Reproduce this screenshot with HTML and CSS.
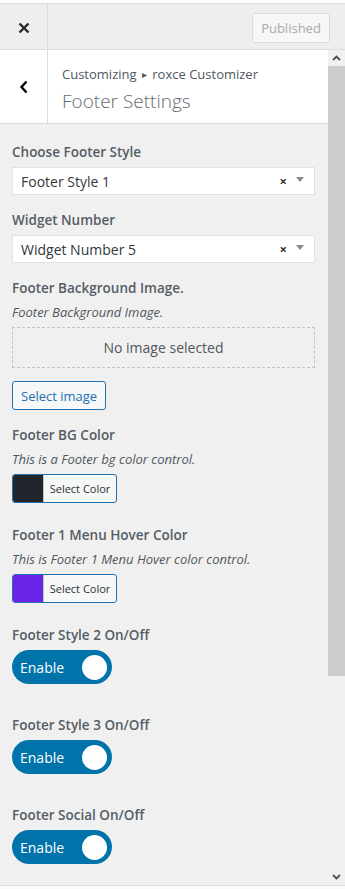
FILE: index.html
```html
<!DOCTYPE html>
<html>
	<head>
		<meta charset="utf-8">
		<title>Footer Settings</title>
		<link rel="stylesheet" href="styles.css">
	</head>
	<body>
		<div class="panel">
			<div class="header">
				<button class="close" type="button">
					<svg width="12" height="12" viewBox="0 0 12 12"><path d="M1.5 1.5l9 9M10.5 1.5l-9 9" stroke="#23282d" stroke-width="2.4" fill="none"/></svg>
				</button>
				<div class="actions">
					<span class="published">Published</span>
				</div>
			</div>

			<div class="scroll">
				<div class="scroll-inner">
					<div class="section-title">
						<button class="back" type="button">
							<svg width="10" height="14" viewBox="0 0 10 14"><path d="M7.5 1.5L2.5 7l5 5.5" stroke="#000" stroke-width="2.4" fill="none"/></svg>
						</button>
						<div class="section-meta">
							<span class="crumb">Customizing <span class="sep">&#9656;</span> roxce Customizer</span>
							<h3>Footer Settings</h3>
						</div>
					</div>

					<ul class="controls">
						<li class="ctl">
							<span class="ctl-title">Choose Footer Style</span>
							<div class="select">
								<span>Footer Style 1</span>
								<span class="clear">&times;</span>
								<span class="caret"></span>
							</div>
						</li>
						<li class="ctl">
							<span class="ctl-title">Widget Number</span>
							<div class="select">
								<span>Widget Number 5</span>
								<span class="clear">&times;</span>
								<span class="caret"></span>
							</div>
						</li>
						<li class="ctl">
							<span class="ctl-title">Footer Background Image.</span>
							<span class="ctl-desc">Footer Background Image.</span>
							<div class="placeholder">No image selected</div>
							<button class="btn" type="button">Select image</button>
						</li>
						<li class="ctl">
							<span class="ctl-title">Footer BG Color</span>
							<span class="ctl-desc">This is a Footer bg color control.</span>
							<button class="color-btn" type="button"><span class="swatch" style="background:#22252b"></span><span class="color-txt">Select Color</span></button>
						</li>
						<li class="ctl ctl-gap">
							<span class="ctl-title">Footer 1 Menu Hover Color</span>
							<span class="ctl-desc">This is Footer 1 Menu Hover color control.</span>
							<button class="color-btn" type="button"><span class="swatch" style="background:#6a24e8"></span><span class="color-txt">Select Color</span></button>
						</li>
						<li class="ctl ctl-gap">
							<span class="ctl-title">Footer Style 2 On/Off</span>
							<div class="toggle"><span>Enable</span><i class="knob"></i></div>
						</li>
						<li class="ctl ctl-switch">
							<span class="ctl-title">Footer Style 3 On/Off</span>
							<div class="toggle"><span>Enable</span><i class="knob"></i></div>
						</li>
						<li class="ctl ctl-switch">
							<span class="ctl-title">Footer Social On/Off</span>
							<div class="toggle"><span>Enable</span><i class="knob"></i></div>
						</li>
					</ul>
				</div>

				<div class="scrollbar">
					<span class="sb-arrow">
						<svg width="9" height="6" viewBox="0 0 9 6"><path d="M1 5l3.5-3.5L8 5" stroke="#505050" stroke-width="1.8" fill="none"/></svg>
					</span>
					<div class="thumb"></div>
					<span class="sb-arrow sb-bottom">
						<svg width="9" height="6" viewBox="0 0 9 6"><path d="M1 1l3.5 3.5L8 1" stroke="#505050" stroke-width="1.8" fill="none"/></svg>
					</span>
				</div>
			</div>
			<div class="footer"></div>
		</div>
	</body>
</html>
```

FILE: styles.css
```css
*{margin: 0; padding: 0; box-sizing: border-box;}
body{background: #fff; font-family: "Open Sans", "Noto Sans", sans-serif; color: #555d66; width: 345px; height: 889px; overflow: hidden;}
button{font-family: inherit; border: 0; background: none;}
ul{list-style: none;}

.panel{padding-top: 3px; height: 889px; display: flex; flex-direction: column;}

/* header */
.header{height: 47px; flex: none; display: flex; background: #eee; border-top: 1px solid #dcdcde; border-bottom: 1px solid #dcdcde;}
.close{width: 48px; border-right: 1px solid #dcdcde; display: flex; align-items: center; justify-content: center; padding-top: 2px;}
.actions{flex: 1; display: flex; align-items: center; justify-content: flex-end; padding: 2px 15px 0 0;}
.published{height: 30px; width: 78px; border: 1px solid #dcdcde; border-radius: 3px; background: #f6f7f7; color: #a7aaad; font-size: 13px; line-height: 28px; text-align: center;}

/* scroll area */
.scroll{flex: 1; display: flex; background: #f0f0f0; min-height: 0;}
.scroll-inner{flex: 1; overflow: hidden;}
.scrollbar{width: 17px; flex: none; display: flex; flex-direction: column; background: #f0f0f0;}
.sb-arrow{height: 16px; display: flex; align-items: center; justify-content: center;}
.sb-bottom{margin-top: auto;}
.thumb{height: 610px; background: #cdcdcd;}

.section-title{height: 74px; display: flex; background: #fff; border-bottom: 1px solid #dcdcde;}
.back{width: 48px; border-right: 1px solid #dcdcde; display: flex; align-items: center; justify-content: center;}
.section-meta{padding: 14px 0 0 14px;}
.crumb{display: block; font-size: 13px; line-height: 20px; color: #50575e;}
.sep{font-size: 10px; position: relative; top: -1px; margin: 0 2px;}
.section-meta h3{font-size: 19px; font-weight: 300; line-height: 28px; color: #646970; margin-top: 2px;}

/* controls */
.controls{padding: 18px 12px 0 12px;}
.ctl{margin-bottom: 15px;}
.ctl-gap{margin-top: 22px;}
.ctl-switch{margin-top: 31px;}
.ctl-title{display: block; font-size: 13.5px; font-weight: 600; line-height: 20px; color: #555d66; margin-bottom: 5px;}
.ctl-desc{display: block; font-size: 13px; font-style: italic; line-height: 18px; color: #50575e; margin: 0 0 6px 0;}

.select{height: 28px; width: 303px; background: #fff; border: 1px solid #e2e2e2; display: flex; align-items: center; padding: 0 8px 0 8px; font-size: 14px; color: #32373c;}
.select span:first-child{flex: 1;}
.clear{font-size: 13px; font-weight: 700; color: #333; margin-right: 9px; line-height: 1;}
.caret{width: 0; height: 0; border-left: 4px solid transparent; border-right: 4px solid transparent; border-top: 5px solid #888; margin-right: 2px; margin-bottom: 3px;}

.placeholder{height: 41px; width: 303px; border: 1px dashed #c3c4c7; text-align: center; line-height: 39px; font-size: 14px; color: #50575e; margin-top: 6px;}
.btn{margin-top: 13px; height: 29px; padding: 0 8px; border: 1px solid #2271b1; border-radius: 3px; background: #f6f7f7; color: #2271b1; font-size: 13px;}

.color-btn{display: flex; height: 29px; width: 105px; border: 1px solid #2271b1; border-radius: 3px; background: #f6f7f7; overflow: hidden; margin-top: 5px;}
.swatch{width: 31px; border-right: 1px solid #c3c4c7;}
.color-txt{flex: 1; font-size: 11px; line-height: 27px; color: #2c3338; text-align: center;}

.toggle{margin-top: 5px; width: 100px; height: 34px; border-radius: 17px; background: #0073aa; display: flex; align-items: center; justify-content: space-between; padding: 0 5px 0 8px; color: #fff; font-size: 14px;}
.knob{width: 25px; height: 25px; border-radius: 50%; background: #fff;}

.footer{height: 4px; border-top: 1px solid #dcdcde; background: #fafafa; flex: none;}
```
